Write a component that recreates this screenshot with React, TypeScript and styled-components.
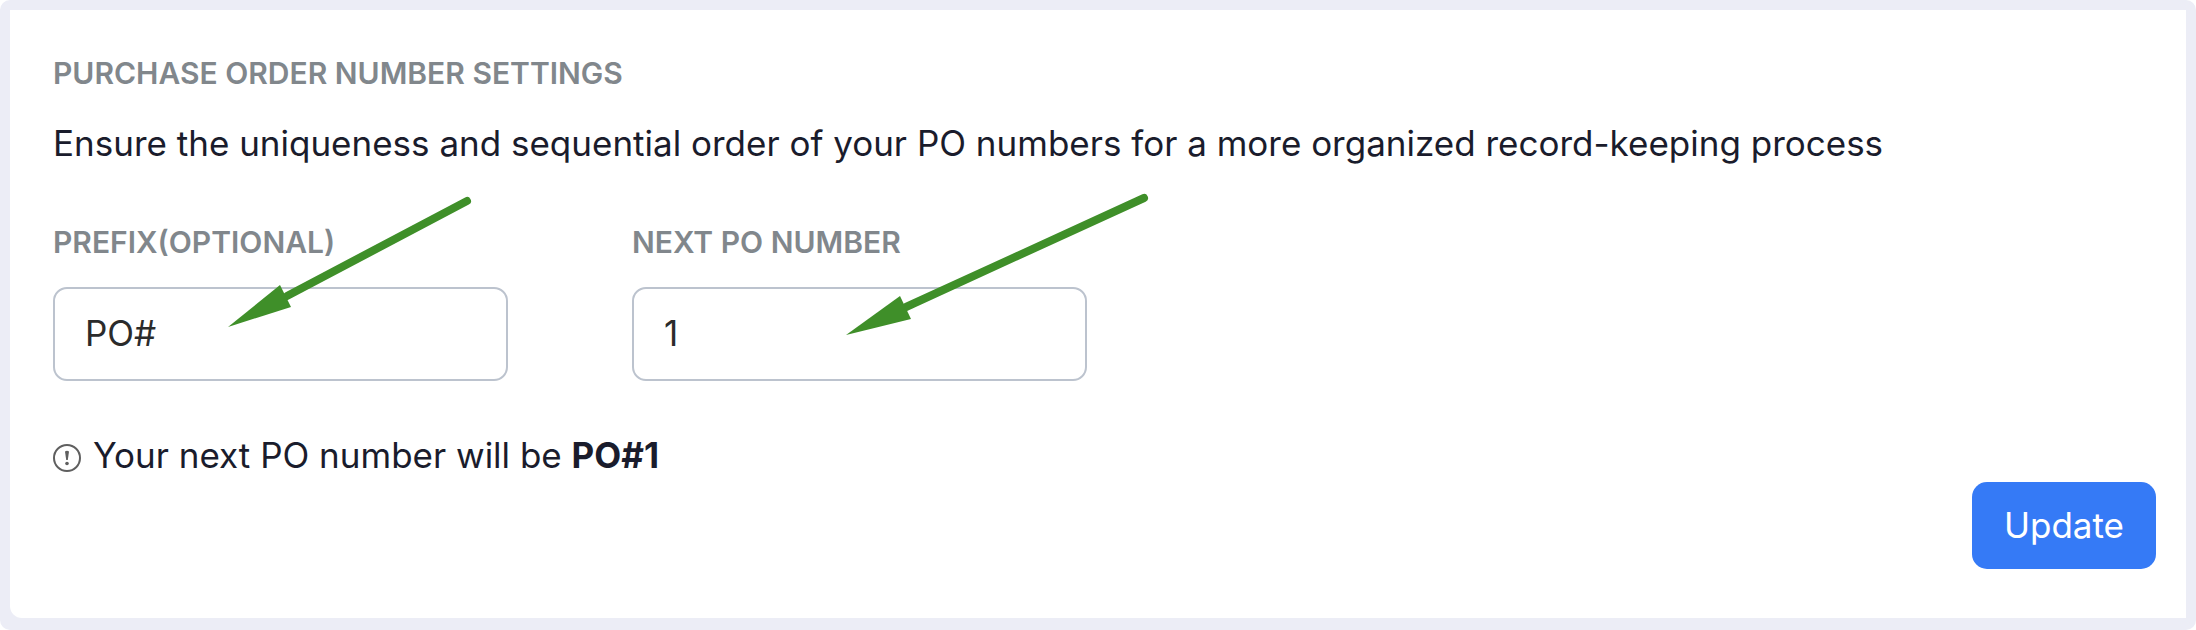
import { useState } from "react";
import styled, { createGlobalStyle } from "styled-components";

const GlobalStyle = createGlobalStyle`
  *, *::before, *::after { box-sizing: border-box; }
  body {
    margin: 0;
    background: #ffffff;
    color: #1a1c2c;
    font-family: Inter, "Liberation Sans", sans-serif;
  }
`;

const Page = styled.main`
  display: flex;
  min-height: 100vh;
  padding: 10px 10px 12px;
  border-radius: 10px;
  background: #ecedf6;
`;

const Card = styled.form`
  flex: 1;
  min-width: 0;
  padding: 40px 30px 48px 43px;
  border-bottom-left-radius: 12px;
  background: #ffffff;
`;

const Heading = styled.h2`
  margin: 0;
  color: #81878c;
  font-size: 30px;
  font-weight: 600;
  line-height: 46px;
`;

const Text = styled.p`
  margin: 0;
  font-size: 35px;
  line-height: 54px;
`;

const Description = styled(Text)`
  margin-top: 20px;
`;

const Fields = styled.div`
  display: flex;
  flex-wrap: wrap;
  gap: 40px 124px;
  margin-top: 49px;
`;

const Field = styled.div`
  position: relative;
  flex: 0 1 455px;
  min-width: 0;
`;

const Label = styled.label`
  display: block;
  color: #81878c;
  font-size: 30px;
  font-weight: 600;
  line-height: 46px;
`;

const Input = styled.input`
  display: block;
  width: 100%;
  height: 94px;
  margin-top: 22px;
  padding: 0 30px 2px;
  border: 2px solid #bcc3ce;
  border-radius: 14px;
  background: #ffffff;
  color: #2b2b2b;
  font: inherit;
  font-size: 35px;
  outline: none;
`;

const Arrow = styled.svg`
  position: absolute;
  top: 0;
  left: 0;
  overflow: visible;
  pointer-events: none;
  fill: #3f8f29;
  stroke: #3f8f29;
`;

const Note = styled(Text)`
  display: flex;
  align-items: center;
  gap: 10px;
  margin-top: 47px;
`;

const InfoIcon = styled.svg`
  flex: none;
  margin-top: 6px;
`;

const Actions = styled.div`
  display: flex;
  justify-content: flex-end;
`;

const Button = styled.button`
  height: 87px;
  padding: 0 32px 2px;
  border: 0;
  border-radius: 15px;
  background: #357af6;
  color: #ffffff;
  font: inherit;
  font-size: 35px;
  cursor: pointer;
`;

export default function App() {
  const [prefix, setPrefix] = useState("PO#");
  const [next, setNext] = useState("1");

  return (
    <>
      <GlobalStyle />
      <Page>
        <Card onSubmit={(e) => e.preventDefault()}>
          <Heading>PURCHASE ORDER NUMBER SETTINGS</Heading>
          <Description>
            Ensure the uniqueness and sequential order of your PO numbers for a more organized
            record-keeping process
          </Description>
          <Fields>
            <Field>
              <Label htmlFor="prefix">PREFIX(OPTIONAL)</Label>
              <Input id="prefix" value={prefix} onChange={(e) => setPrefix(e.target.value)} />
              <Arrow width="455" height="162" viewBox="0 0 455 162" aria-hidden="true">
                <path d="M414 -18L234 77" strokeWidth="8" strokeLinecap="round" />
                <path d="M175 108L227 66L238 88Z" stroke="none" />
              </Arrow>
            </Field>
            <Field>
              <Label htmlFor="next">NEXT PO NUMBER</Label>
              <Input id="next" value={next} onChange={(e) => setNext(e.target.value)} />
              <Arrow width="455" height="162" viewBox="0 0 455 162" aria-hidden="true">
                <path d="M512 -21L274 88" strokeWidth="8" strokeLinecap="round" />
                <path d="M214 116L268 77L279 100Z" stroke="none" />
              </Arrow>
            </Field>
          </Fields>
          <Note>
            <InfoIcon width="30" height="30" viewBox="0 0 30 30" aria-hidden="true">
              <circle cx="14" cy="15" r="13" fill="none" stroke="#5f5f5f" strokeWidth="2" />
              <path d="M12 8.5Q14 7 16 8.5L14.8 17H13.2Z" fill="#5f5f5f" />
              <circle cx="14" cy="20.5" r="1.8" fill="#5f5f5f" />
            </InfoIcon>
            <span>
              Your next PO number will be <strong>{prefix + next}</strong>
            </span>
          </Note>
          <Actions>
            <Button type="submit">Update</Button>
          </Actions>
        </Card>
      </Page>
    </>
  );
}
